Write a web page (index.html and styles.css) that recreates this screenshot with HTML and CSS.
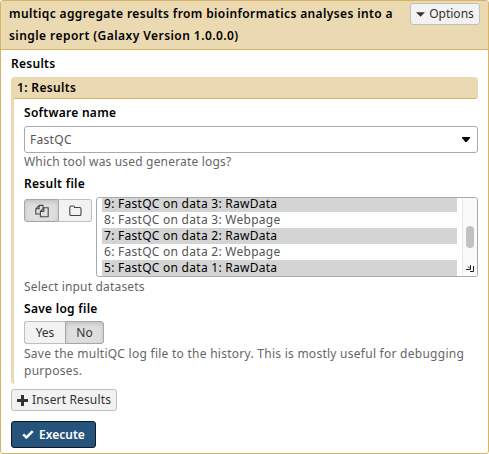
FILE: index.html
```html
<!DOCTYPE html>
<html lang="en">
<head>
<meta charset="utf-8">
<title>multiqc</title>
<link rel="stylesheet" href="styles.css">
</head>
<body>
<main class="tool">
  <header class="tool-header">
    <h1 class="title"><span class="title-first">multiqc aggregate results from bioinformatics analyses into a</span><br><span class="title-second">single report (Galaxy Version 1.0.0.0)</span></h1>
    <button class="btn options"><svg width="9" height="5" viewBox="0 0 9 5"><path d="M0 0.3h9L4.5 4.8z" fill="#333"/></svg><span>Options</span></button>
  </header>
  <div class="tool-body">
    <div class="label group-label"><span>Results</span></div>
    <section class="repeat">
      <h2 class="repeat-title"><span>1: Results</span></h2>
      <div class="fields">
        <div class="label software"><span>Software name</span></div>
        <div class="select"><span>FastQC</span><svg width="8" height="5" viewBox="0 0 8 5"><path d="M0 0h8v1L4.6 5H3.4L0 1z" fill="#000"/></svg></div>
        <p class="help which"><span>Which tool was used generate logs?</span></p>
        <div class="label result-file"><span>Result file</span></div>
        <div class="data-row">
          <div class="btn-group source">
            <button class="btn active"><svg width="14" height="14" viewBox="0 0 14 14" fill="none" stroke="#444" stroke-width="1.1" stroke-linejoin="round"><path d="M5 10H.8V4.8L4.2 1.4H8v2.4M4.2 1.4v3.4H.8M5.4 12.8V7.4l3.4-3.6h4.4v9zM8.8 3.8v3.6H5.4"/></svg></button>
            <button class="btn"><svg width="13" height="12" viewBox="0 0 13 12" fill="none" stroke="#444" stroke-width="1.1"><path d="M.8 9.2V2.3q0-1.3 1.3-1.3h2.2q1.2 0 1.2 1.2v.3h5.2q1.3 0 1.3 1.3v5.4q0 1.3-1.3 1.3H2.1Q.8 10.5.8 9.2z"/></svg></button>
          </div>
          <div class="list">
            <ul class="rows">
              <li class="row picked"><span>9: FastQC on data 3: RawData</span></li>
              <li class="row"><span>8: FastQC on data 3: Webpage</span></li>
              <li class="row picked"><span>7: FastQC on data 2: RawData</span></li>
              <li class="row"><span>6: FastQC on data 2: Webpage</span></li>
              <li class="row picked"><span>5: FastQC on data 1: RawData</span></li>
            </ul>
            <div class="scroll"><div class="thumb"></div><svg width="9" height="8" viewBox="0 0 9 8" fill="none" stroke="#222"><path d="M0 5.5h4.5V1M2 2.5l2 2M4 7.5h3.5V2"/></svg></div>
          </div>
        </div>
        <p class="help inputs"><span>Select input datasets</span></p>
        <div class="label save-log"><span>Save log file</span></div>
        <div class="btn-group toggle"><button class="btn yes">Yes</button><button class="btn no active">No</button></div>
        <p class="help log-help"><span class="log-first">Save the multiQC log file to the history. This is mostly useful for debugging</span><br><span>purposes.</span></p>
      </div>
    </section>
    <button class="btn insert"><svg width="11" height="11" viewBox="0 0 11 11"><path d="M4 0h3v4h4v3H7v4H4V7H0V4h4z" fill="#333"/></svg><span>Insert Results</span></button>
    <button class="btn execute"><svg width="12" height="9" viewBox="0 0 12 9"><path d="M1.2 4.4l3.2 3 6.3-6.2" fill="none" stroke="#fff" stroke-width="2.5"/></svg><span>Execute</span></button>
  </div>
</main>
</body>
</html>
```
FILE: styles.css
```css
* { box-sizing: border-box; }
body { margin: 0; background: #fff; font: 12px/16px "Noto Sans", "Open Sans", sans-serif; color: #000; }
h1, h2, p, ul { margin: 0; padding: 0; font-size: 12px; list-style: none; }
svg { display: block; flex: none; }
span { white-space: nowrap; }
.tool { width: 489px; height: 454px; border: 1px solid #d8b365; border-radius: 3px; overflow: hidden; }
.tool-header { display: flex; justify-content: space-between; height: 49px; padding: 2px 8px 0; background: #ebd9b2; border-bottom: 1px solid #d8b365; }
.title { line-height: 22px; font-weight: 600; letter-spacing: .38px; }
.title-second { letter-spacing: .44px; }
.btn { display: flex; align-items: center; justify-content: center; height: 23px; padding: 0; border: 1px solid #bfbfbf; border-radius: 3px; background: #f2f2f2; color: #333; font: 12px/16px "Noto Sans", "Open Sans", sans-serif; }
.options { width: 70px; height: 22px; gap: 4px; }
.tool-body { padding: 5px 10px 0; }
.label { height: 16px; font-weight: 600; letter-spacing: .28px; }
.group-label { height: 22px; padding-top: 1px; }
.repeat { width: 467px; height: 307px; border-left: 3px solid #ebd9b2; border-radius: 4px; }
.repeat-title { height: 22px; padding: 2px 3px; line-height: 17px; font-weight: 600; letter-spacing: .35px; background: #ebd9b2; border-bottom: 1px solid #d8b365; border-radius: 0 4px 4px 0; }
.fields { padding: 6px 0 0 10px; }
.select { display: flex; align-items: center; justify-content: space-between; height: 27px; margin-top: 5px; padding: 0 7px 0 5px; border: 1px solid #aaa; border-radius: 3px; color: #555; letter-spacing: .3px; }
.help { line-height: 17px; color: #666; letter-spacing: .18px; }
.result-file { margin-top: 6px; }
.data-row { display: flex; gap: 4px; margin-top: 5px; }
.btn-group { display: flex; }
.btn-group .btn:first-child { border-radius: 3px 0 0 3px; }
.btn-group .btn:last-child { border-radius: 0 3px 3px 0; }
.btn-group .btn.active { background: #dedede; border: 1px solid #a6a6a6; box-shadow: inset 0 2px 4px rgba(0,0,0,.13); }
.source { margin-top: 2px; }
.source .btn:first-child { width: 35px; }
.source .btn:last-child { border-left: 0; width: 33px; }
.list { display: flex; justify-content: space-between; width: 382px; height: 80px; padding-left: 5px; border: 1px solid #aaa; border-radius: 3px; overflow: hidden; }
.rows { width: 355px; margin-top: -2px; }
.row { height: 16px; padding-left: 2px; color: #555; letter-spacing: .27px; }
.picked { background: #d4d4d4; color: #000; }
.scroll { display: flex; flex-direction: column; align-items: center; justify-content: space-between; width: 15px; padding: 28px 0 4px; background: #fafafa; border-left: 1px solid #e8e8e8; }
.thumb { width: 8px; height: 22px; border-radius: 4px; background: #c1c1c1; }
.inputs { margin-top: 1px; }
.save-log { margin-top: 6px; }
.toggle { margin-top: 4px; height: 23px; }
.yes { width: 41px; border-right: 0; }
.no { width: 39px; }
.log-help { margin-top: 1px; letter-spacing: .26px; }
.insert { width: 106px; height: 22px; margin-top: 5px; gap: 4px; letter-spacing: .15px; }
.execute { width: 85px; height: 27px; margin-top: 10px; gap: 5px; border-color: #0c1a29; background: #25537b; color: #fff; font-weight: 600; }
```
